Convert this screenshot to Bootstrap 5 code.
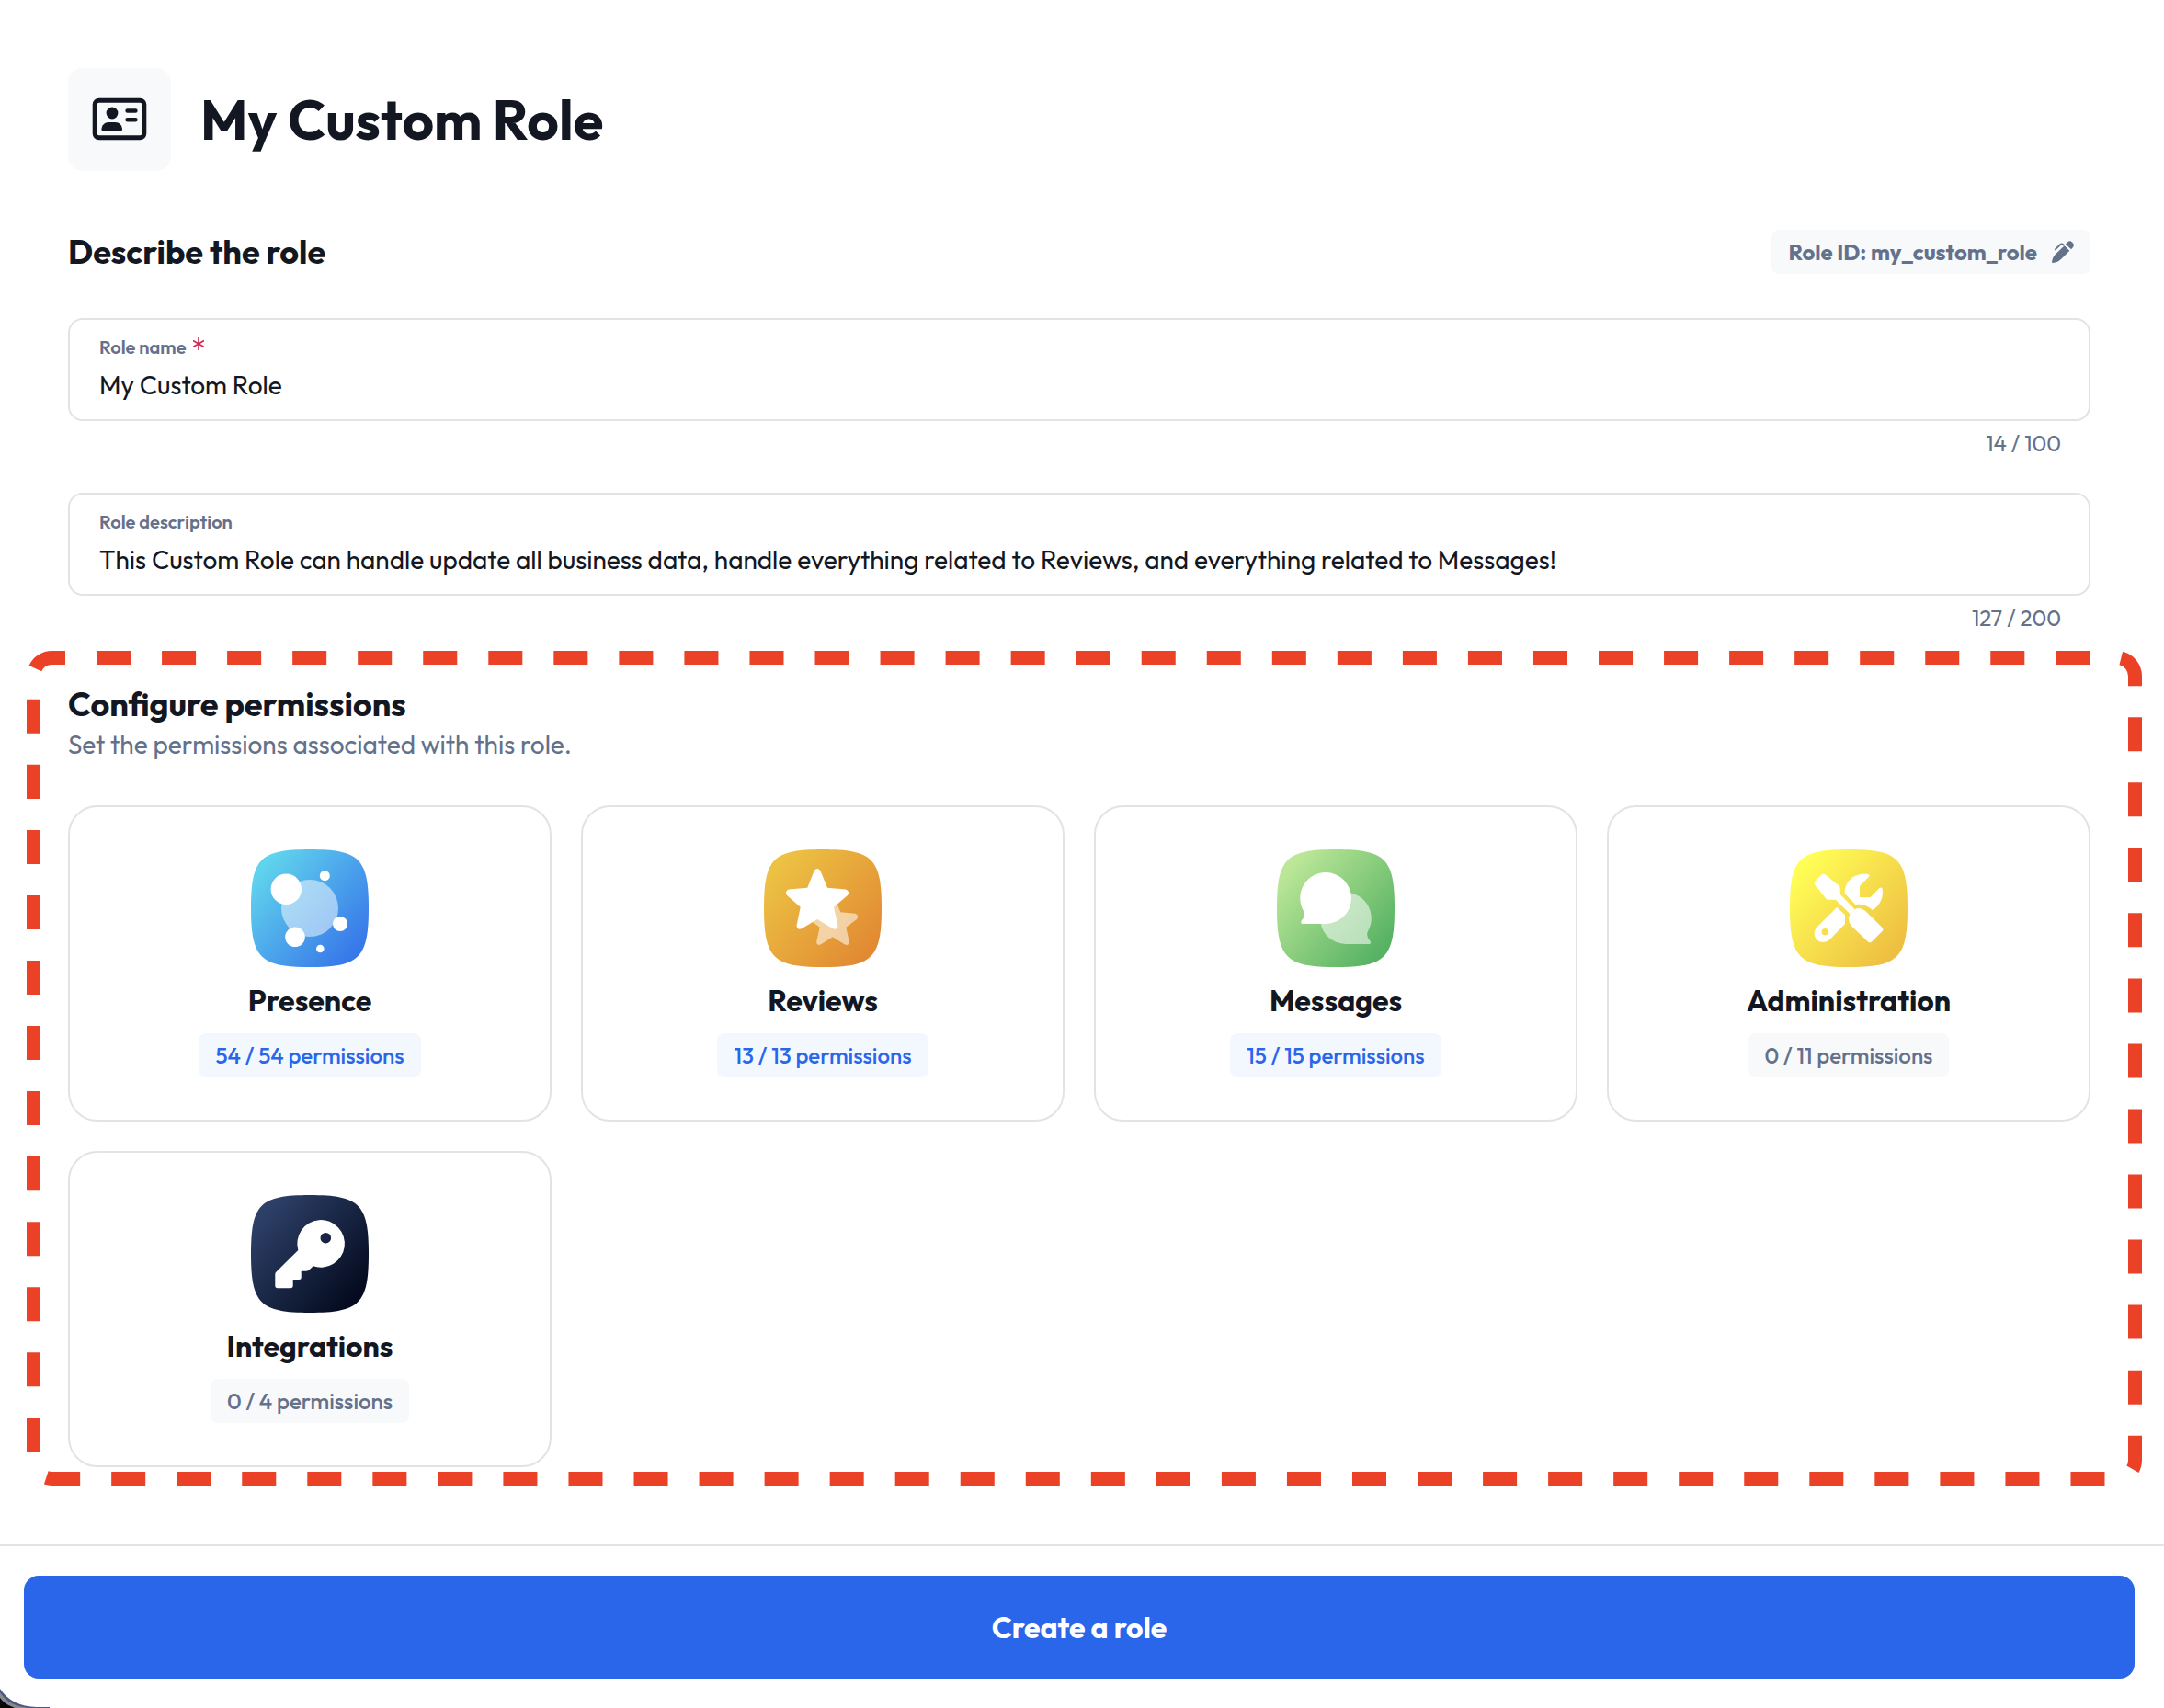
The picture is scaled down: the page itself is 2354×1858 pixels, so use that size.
<!DOCTYPE html>
<html lang="en">
<head>
<meta charset="utf-8">
<meta name="viewport" content="width=device-width, initial-scale=1">
<title>My Custom Role</title>
<link rel="stylesheet" href="https://cdn.jsdelivr.net/npm/bootstrap@5.3.0/dist/css/bootstrap.min.css">
<style>
  :root { --ink: #131722; --muted: #64718a; --line: #e3e3e3; --soft: #f8f9fb; --accent: #2a66ea; }
  body { font-family: Outfit, Lato, sans-serif; color: var(--ink); background: #fff; }
  .role-main { padding: 74px 80px 84px 74px; }
  .role-icon { width: 112px; height: 112px; border-radius: 16px; background: var(--soft); }
  .role-title { font-size: 60px; line-height: 72px; font-weight: 700; }
  .section-title { font-size: 36px; line-height: 48px; font-weight: 700; }
  .section-sub { font-size: 28px; line-height: 40px; color: var(--muted); }
  .describe-head { margin-top: 64px; margin-bottom: 48px; }
  .id-btn { height: 48px; padding: 0 18px; gap: 16px; border: 0; border-radius: 8px; background: var(--soft); color: var(--muted); font-size: 24px; font-weight: 700; line-height: 48px; }
  .field-box { padding: 17px 32px 16px; border: 2px solid var(--line); border-radius: 16px; }
  .field-box label { font-size: 20px; line-height: 26px; font-weight: 600; color: var(--muted); }
  .field-box .form-control-plaintext { font-size: 28px; line-height: 40px; height: 49px; padding: 7px 0 2px; color: var(--ink); outline: 0; }
  .req-star { width: 12px; height: 14px; margin-bottom: 8px; }
  .field-count { margin: 8px 32px 0; font-size: 24px; line-height: 32px; color: var(--muted); }
  .field-group + .field-group { margin-top: 38px; }
  .perm-section { margin-top: 54px; }
  .perm-grid { --bs-gutter-x: 32px; --bs-gutter-y: 32px; padding-top: 46px; }
  .perm-card { padding: 46px; border: 2px solid var(--line); border-radius: 32px; color: var(--ink); }
  .perm-card svg { width: 128px; height: 128px; }
  .perm-name { margin: 16px 0; font-size: 32px; line-height: 40px; font-weight: 700; }
  .perm-count { height: 48px; padding: 0 18px; border-radius: 8px; background: var(--soft); color: var(--muted); font-size: 24px; line-height: 48px; font-weight: 500; }
  .perm-count.is-full { background: #f3f8ff; color: var(--accent); }
  .dash-frame { top: -34px; left: -45px; width: calc(100% + 101px); height: calc(100% + 54px); pointer-events: none; }
  .dash-frame rect { width: calc(100% - 15px); height: calc(100% - 15px); }
  .role-foot { padding: 32px 32px 32px 26px; border-top: 2px solid var(--line); }
  .create-btn { height: 112px; border-radius: 16px; border: 0; font-size: 32px; font-weight: 700; background: var(--accent); }
  .window-corner { left: 0; bottom: 0; width: 54px; height: 22px; }
</style>
<script src="https://cdn.jsdelivr.net/npm/bootstrap@5.3.0/dist/js/bootstrap.bundle.min.js" defer></script>
</head>
<body class="min-vh-100 d-flex flex-column">
<main class="role-main flex-grow-1">
  <header class="d-flex align-items-center">
    <div class="role-icon flex-shrink-0">
      <svg width="112" height="112" viewBox="0 0 112 112" fill="none" stroke="#131722" aria-hidden="true">
        <rect x="29.200" y="35.200" width="53.600" height="40.600" rx="4.500" stroke-width="5"/>
        <circle cx="48" cy="49" r="6.400" fill="#131722" stroke="none"/>
        <path d="M37.500 68Q36.400 68 36.400 67C36.500 62 40 59 44 59H51.500C55.500 59 59 62 59 67Q59 68 58 68Z" fill="#131722" stroke="none"/>
        <path d="M64.600 46.500H73.400M64.600 56.200H73.400" stroke-width="4.600" stroke-linecap="round"/>
      </svg>
    </div>
    <h1 class="role-title mb-0 ms-4 ps-2">My Custom Role</h1>
  </header>

  <div class="describe-head d-flex justify-content-between align-items-center">
    <h2 class="section-title mb-0">Describe the role</h2>
    <button type="button" class="id-btn d-inline-flex align-items-center">Role ID: my_custom_role
      <svg width="24" height="24" viewBox="0 0 24 24" fill="#64718a" aria-hidden="true">
        <path d="M15 3.500L17 1.500Q19.500-1 22.300 1.700Q25.200 4.600 23 7L21 9.200Z"/>
        <path d="M13.700 5.300L19.300 10.700L10.500 19.500Q6.500 23.500 1 24Q0 24 0 23Q.500 17.800 4.500 14Z"/>
        <path d="M3.800 9.400L8.700 4.500Q10.700 2.600 12.700 4.500" fill="none" stroke="#64718a" stroke-width="1.800" stroke-linecap="round"/>
      </svg>
    </button>
  </div>

  <div class="field-group">
    <div class="field-box">
      <div class="d-flex align-items-center">
        <label for="role-name">Role name</label>
        <svg class="req-star ms-2" viewBox="0 0 12 14" stroke="#cf2a52" stroke-width="1.600" role="img" aria-label="required"><path d="M6 0V14M0 3.500L12 10.500M12 3.500L0 10.500"/></svg>
      </div>
      <input id="role-name" type="text" class="form-control-plaintext" value="My Custom Role" maxlength="100" required>
    </div>
    <div class="field-count text-end">14 / 100</div>
  </div>
  <div class="field-group">
    <div class="field-box">
      <div class="d-flex"><label for="role-desc">Role description</label></div>
      <input id="role-desc" type="text" class="form-control-plaintext" maxlength="200" value="This Custom Role can handle update all business data, handle everything related to Reviews, and everything related to Messages!">
    </div>
    <div class="field-count text-end">127 / 200</div>
  </div>

  <section class="perm-section position-relative">
    <h2 class="section-title mb-0">Configure permissions</h2>
    <p class="section-sub mb-0">Set the permissions associated with this role.</p>
    <div class="row row-cols-1 row-cols-md-2 row-cols-xl-4 perm-grid">
      <div class="col">
        <a href="#presence" class="card perm-card align-items-center text-decoration-none">
          <svg viewBox="0 0 128 128" aria-hidden="true">
            <linearGradient id="g-presence" x1=".1" y1=".15" x2=".9" y2=".85"><stop stop-color="#60d3ed"/><stop offset="1" stop-color="#3878e9"/></linearGradient>
            <path fill="url(#g-presence)" d="M0 64C0 10 10 0 64 0S128 10 128 64S118 128 64 128S0 118 0 64Z"/>
            <circle cx="64" cy="64" r="31" fill="#fff" opacity=".5"/>
            <g fill="#fff"><circle cx="38.300" cy="43.300" r="16.700"/><circle cx="80.300" cy="28.700" r="5.500"/><circle cx="97" cy="81" r="8"/><circle cx="48" cy="95.300" r="10.800"/><circle cx="75.300" cy="108" r="4.300"/></g>
          </svg>
          <h3 class="perm-name">Presence</h3>
          <span class="perm-count is-full">54 / 54 permissions</span>
        </a>
      </div>
      <div class="col">
        <a href="#reviews" class="card perm-card align-items-center text-decoration-none">
          <svg viewBox="0 0 128 128" fill="#fff" aria-hidden="true">
            <linearGradient id="g-reviews" x1=".1" y1=".15" x2=".9" y2=".85"><stop stop-color="#ecc243"/><stop offset="1" stop-color="#e28a33"/></linearGradient>
            <path fill="url(#g-reviews)" d="M0 64C0 10 10 0 64 0S128 10 128 64S118 128 64 128S0 118 0 64Z"/>
            <path opacity=".55" d="M71 55Q75 51 79 58L83.300 68.300L99.500 69.700Q104 72 101 76L89.300 84.700L92.700 100Q92.500 105.500 87.500 103.300L74.700 95.300L62 103.300Q57 105.500 57.300 100L60.700 84.700L49 76L54 70L66 68Z"/>
            <path d="M54.700 23Q58 19 61.300 23L69 41.700L89 43.500Q94 45.500 91 50L76 62.700L80.500 83Q80 88 75 86.200L58 76L41 86.200Q36 88 35.500 83L39.700 62.700L25 50Q22 45.500 27 43.500L47.300 41.700Z"/>
          </svg>
          <h3 class="perm-name">Reviews</h3>
          <span class="perm-count is-full">13 / 13 permissions</span>
        </a>
      </div>
      <div class="col">
        <a href="#messages" class="card perm-card align-items-center text-decoration-none">
          <svg viewBox="0 0 128 128" fill="#fff" aria-hidden="true">
            <linearGradient id="g-messages" x1=".1" y1=".15" x2=".9" y2=".85"><stop stop-color="#bce798"/><stop offset="1" stop-color="#57b263"/></linearGradient>
            <path fill="url(#g-messages)" d="M0 64C0 10 10 0 64 0S128 10 128 64S118 128 64 128S0 118 0 64Z"/>
            <path opacity=".55" d="M75 47A28 28 0 1 0 75 103H101Q102.800 102 101.300 99.500Q96.500 94 99 89A28 28 0 0 0 75 47Z"/>
            <path d="M53 25A28 28 0 1 1 53 81H27.500Q25.300 80 26.800 77.500Q31.500 72 29 67A28 28 0 0 1 53 25Z"/>
          </svg>
          <h3 class="perm-name">Messages</h3>
          <span class="perm-count is-full">15 / 15 permissions</span>
        </a>
      </div>
      <div class="col">
        <a href="#administration" class="card perm-card align-items-center text-decoration-none">
          <svg viewBox="0 0 128 128" fill="#fff" aria-hidden="true">
            <linearGradient id="g-admin" x1=".1" y1=".15" x2=".9" y2=".85"><stop stop-color="#fffe56"/><stop offset="1" stop-color="#eebf42"/></linearGradient>
            <path fill="url(#g-admin)" d="M0 64C0 10 10 0 64 0S128 10 128 64S118 128 64 128S0 118 0 64Z"/>
            <path d="M34.500 27.500Q36.700 26 39 27.700L53.500 39.500Q54.700 40.700 54.700 42.500V48.700L70.300 64.700L65.700 70.500L49.700 54.700H41.500Q40.300 54.700 39.300 53.500L27.500 39Q26 36.700 27.500 34.500Z"/>
            <path d="M70 65.500Q76 62 82 66.700L100.500 85Q102.200 87 100.500 89L89 100.500Q87 102.200 85 100.500L67 83.300Q62 77 65.300 70.500Z"/>
            <path d="M85.500 27.300Q87.500 28 86 29.800L76 39.700V52H87.500L97.500 42Q99.500 41 100.500 42.500C102.500 52 97.500 62 89.700 66C84 60.500 78 59 71.300 60L59.700 48C59 36 70 24.500 85.500 27.300Z"/>
            <path fill-rule="evenodd" d="M51.300 62.700L60 71.300V81L43.500 98C33 107 21 94 29.500 84.500ZM38.300 86A3.700 3.700 0 1 0 38.300 93.400A3.700 3.700 0 1 0 38.300 86Z"/>
          </svg>
          <h3 class="perm-name">Administration</h3>
          <span class="perm-count">0 / 11 permissions</span>
        </a>
      </div>
      <div class="col">
        <a href="#integrations" class="card perm-card align-items-center text-decoration-none">
          <svg viewBox="0 0 128 128" fill="#fff" aria-hidden="true">
            <linearGradient id="g-integr" x1=".1" y1=".15" x2=".9" y2=".85"><stop stop-color="#2d4068"/><stop offset="1" stop-color="#040b1f"/></linearGradient>
            <path fill="url(#g-integr)" d="M0 64C0 10 10 0 64 0S128 10 128 64S118 128 64 128S0 118 0 64Z"/>
            <path fill-rule="evenodd" d="M51.300 60A25.800 25.800 0 1 1 67.700 77.300L64 80.800Q62.300 82.700 60 82.700H54.700V89.500Q54.700 92 52.200 92H45.700V98.500Q45.700 101.300 43 101.300H29Q26.300 101.300 26.300 98.500V86Q26.300 84.500 27.500 83.500ZM81.300 40.900A5.800 5.800 0 1 0 81.300 52.500A5.800 5.800 0 1 0 81.300 40.900Z"/>
          </svg>
          <h3 class="perm-name">Integrations</h3>
          <span class="perm-count">0 / 4 permissions</span>
        </a>
      </div>
    </div>
    <svg class="dash-frame position-absolute" aria-hidden="true">
      <rect x="7.500" y="7.500" rx="20" fill="none" stroke="#ea4127" stroke-width="15" pathLength="6319" stroke-dasharray="37 34" stroke-dashoffset="22.500"/>
    </svg>
  </section>
</main>

<footer class="role-foot position-relative">
  <button type="submit" class="btn btn-primary create-btn w-100">Create a role</button>
  <svg class="window-corner position-absolute" viewBox="0 0 54 22" aria-hidden="true">
    <path fill="#4b587f" d="M0 1Q12 20 40 21H54V22H0Z"/>
    <path fill="#8a8a8c" d="M0 5Q9 19 26 21L30 22H0Z"/>
    <path fill="#08090c" d="M0 11Q5 18 14 21L16 22H0Z"/>
  </svg>
</footer>
</body>
</html>
